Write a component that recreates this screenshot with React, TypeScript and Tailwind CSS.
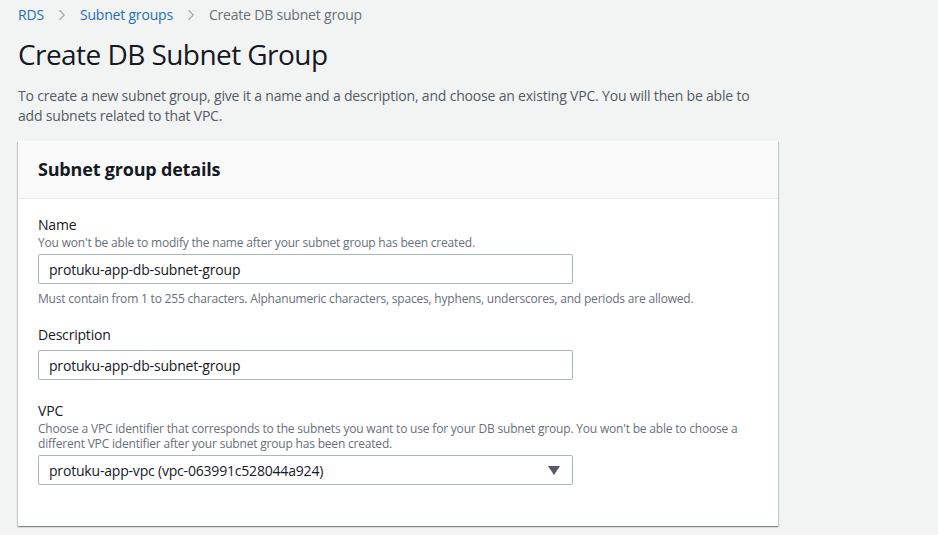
import { ChevronRight } from 'lucide-react';

const font = { fontFamily: '"Open Sans", "Noto Sans", Arial, sans-serif' };

function Field({
  label,
  help,
  value,
  select,
  hint,
  className = '',
}: {
  label: string;
  help?: React.ReactNode;
  value: string;
  select?: boolean;
  hint?: string;
  className?: string;
}) {
  return (
    <div className={className}>
      <div className="text-[14px] leading-[20px] text-[#16191f]">{label}</div>
      {help && <div className="text-[12px] leading-[15px] text-[#687078]">{help}</div>}
      <div
        className={`${help ? 'mt-[4px]' : 'mt-[5px]'} w-[535px] h-[30px] border border-[#aab7b8] rounded-[2px] bg-white flex items-center justify-between pl-[10px] pr-[12px]`}
      >
        <span className="text-[14px] text-[#16191f]">{value}</span>
        {select && (
          <svg width="12" height="9" viewBox="0 0 12 9">
            <path d="M0 0 H12 L6 9 Z" fill="#545b64" />
          </svg>
        )}
      </div>
      {hint && <div className="mt-[7px] text-[12px] leading-[15px] text-[#687078]">{hint}</div>}
    </div>
  );
}

export default function App() {
  return (
    <div className="min-h-screen bg-[#f2f3f3] px-[18px] pt-[5px] tracking-[-0.012em]" style={font}>
      {/* Breadcrumbs */}
      <nav className="flex items-center text-[14px] leading-[20px] h-[20px]">
        <span className="text-[#1f6fb2]">RDS</span>
        <ChevronRight size={18} strokeWidth={1.5} className="text-[#a0a9aa] mx-[9px]" />
        <span className="text-[#1f6fb2]">Subnet groups</span>
        <ChevronRight size={18} strokeWidth={1.5} className="text-[#a0a9aa] mx-[9px]" />
        <span className="text-[#687078]">Create DB subnet group</span>
      </nav>

      <h1 className="mt-[11px] text-[28px] leading-[36px] text-[#16191f] font-normal tracking-[-0.02em]">Create DB Subnet Group</h1>

      <p className="mt-[14px] text-[14px] leading-[20px] text-[#545b64] w-[750px]">
        To create a new subnet group, give it a name and a description, and choose an existing VPC. You will then be able to add subnets related to that VPC.
      </p>

      {/* Card */}
      <div className="mt-[15px] w-[760px] bg-white shadow-[0_1px_1px_0_rgba(0,28,36,0.3),1px_1px_1px_0_rgba(0,28,36,0.15),-1px_1px_1px_0_rgba(0,28,36,0.15)]">
        <div className="h-[58px] bg-[#fafafa] border-b border-[#eaeded] flex items-center px-[20px]">
          <h2 className="text-[18px] font-bold text-[#16191f]">Subnet group details</h2>
        </div>
        <div className="px-[20px] pt-[16px] pb-[41px] flex flex-col gap-[21px]">
          <Field
            label="Name"
            help="You won't be able to modify the name after your subnet group has been created."
            value="protuku-app-db-subnet-group"
            hint="Must contain from 1 to 255 characters. Alphanumeric characters, spaces, hyphens, underscores, and periods are allowed."
          />
          <Field className="-mt-[2px]" label="Description" value="protuku-app-db-subnet-group" />
          <Field
            label="VPC"
            help={
              <>
                Choose a VPC identifier that corresponds to the subnets you want to use for your DB subnet group. You won't be able to choose a
                <br />
                different VPC identifier after your subnet group has been created.
              </>
            }
            value="protuku-app-vpc (vpc-063991c528044a924)"
            select
          />
        </div>
      </div>
    </div>
  );
}
